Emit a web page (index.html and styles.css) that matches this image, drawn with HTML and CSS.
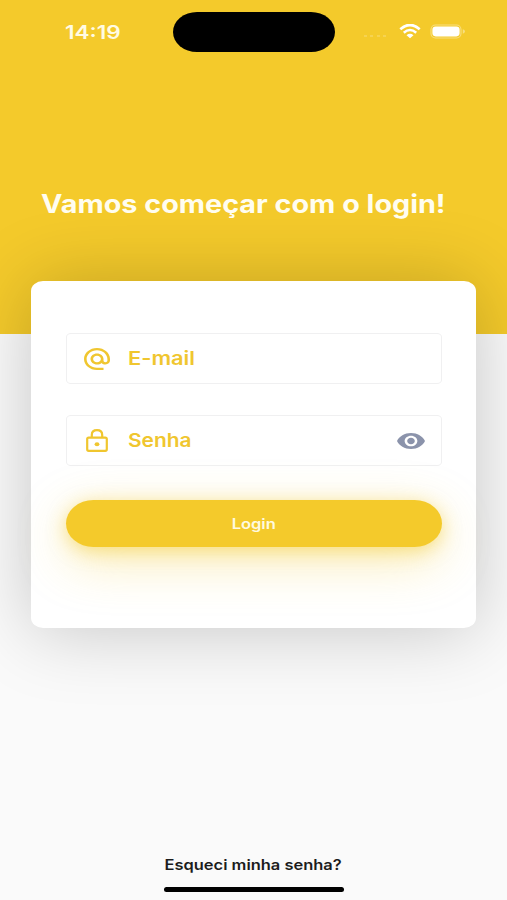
FILE: index.html
```html
<!DOCTYPE html>
<html lang="pt-BR">
<head>
    <meta charset="UTF-8">
    <meta name="viewport" content="width=device-width, initial-scale=1.0">
    <title>Login</title>
    <link rel="stylesheet" href="styles.css">
</head>
<body>
    <div class="screen">
        <header class="hero">
            <div class="status-bar">
                <span class="time"><span class="wide">14:19</span></span>
                <div class="island"></div>
                <div class="status-icons">
                    <svg class="signal" viewBox="0 0 25 6">
                        <path d="M1 3h4M7 3h4M14 3h4M20 3h4" stroke="#fff" stroke-width="2" stroke-dasharray="3 1"/>
                    </svg>
                    <svg class="wifi" viewBox="0 0 22 15">
                        <path d="M1.3 5.2Q11-3.2 20.7 5.2" fill="none" stroke="#fff" stroke-width="2.7"/>
                        <path d="M4.8 8.8Q11 3.3 17.2 8.8" fill="none" stroke="#fff" stroke-width="2.5"/>
                        <path d="M7.5 11.2Q11 8.4 14.5 11.2L11 14.3z" fill="#fff"/>
                    </svg>
                    <svg class="battery" viewBox="0 0 37 16">
                        <rect x="1" y="1" width="30" height="13" rx="4.5" fill="none" stroke="#fff" stroke-opacity=".4" stroke-width="1.1"/>
                        <rect x="2.4" y="2.6" width="27.2" height="9.8" rx="3.3" fill="#fff"/>
                        <path d="M32.8 5.3v4.4q2.2-.6 2.2-2.2t-2.2-2.2z" fill="#fff" fill-opacity=".4"/>
                    </svg>
                </div>
            </div>
            <h1 class="title"><span class="wide">Vamos começar com o login!</span></h1>
        </header>

        <form class="card">
            <div class="field">
                <svg class="icon-at" viewBox="2 2 20 20" preserveAspectRatio="none" fill="#f0c62f">
                    <path d="M12 2C6.48 2 2 6.48 2 12s4.48 10 10 10h5v-2h-5c-4.34 0-8-3.66-8-8s3.66-8 8-8 8 3.66 8 8v1.43c0 .79-.71 1.57-1.5 1.57s-1.5-.78-1.5-1.57V12c0-2.76-2.24-5-5-5s-5 2.24-5 5 2.24 5 5 5c1.38 0 2.64-.56 3.54-1.47.65.89 1.77 1.47 2.96 1.47 1.97 0 3.5-1.6 3.5-3.57V12c0-5.52-4.48-10-10-10zm0 13c-1.66 0-3-1.34-3-3s1.34-3 3-3 3 1.34 3 3-1.34 3-3 3z"/>
                </svg>
                <span class="label"><span class="wide">E-mail</span></span>
            </div>
            <div class="field">
                <svg class="icon-lock" viewBox="0 0 22 23">
                    <rect x="1.2" y="8.6" width="19.6" height="13.2" rx="1.5" fill="none" stroke="#f0c62f" stroke-width="2.2"/>
                    <path d="M5.8 8.5V6Q5.8 1.2 11 1.2T16.2 6V8.5" fill="none" stroke="#f0c62f" stroke-width="2.2"/>
                    <ellipse cx="11" cy="15.2" rx="2.4" ry="2" fill="#f0c62f"/>
                </svg>
                <span class="label password"><span class="wide">Senha</span></span>
                <svg class="icon-eye" viewBox="1 4.5 22 15" preserveAspectRatio="none" fill="#8b93ab">
                    <path d="M12 4.5C7 4.5 2.73 7.61 1 12c1.73 4.39 6 7.5 11 7.5s9.27-3.11 11-7.5c-1.73-4.39-6-7.5-11-7.5zM12 17c-2.76 0-5-2.24-5-5s2.24-5 5-5 5 2.24 5 5-2.24 5-5 5zm0-8c-1.66 0-3 1.34-3 3s1.34 3 3 3 3-1.34 3-3-1.34-3-3-3z"/>
                </svg>
            </div>
            <button class="login" type="button"><span class="wide">Login</span></button>
        </form>

        <footer class="footer">
            <a class="forgot"><span class="wide">Esqueci minha senha?</span></a>
            <div class="home-bar"></div>
        </footer>
    </div>
</body>
</html>
```
FILE: styles.css
```css
* {
    box-sizing: border-box;
}

body {
    margin: 0;
    font-family: Inter, "Open Sans", sans-serif;
    background-color: #fafafa;
}

.screen {
    display: flex;
    flex-direction: column;
    height: 900px;
    overflow: hidden;
}

svg {
    display: block;
    flex: none;
}

/* wide letterforms */
.wide {
    display: inline-block;
    transform: scaleX(1.15);
    transform-origin: left center;
    white-space: nowrap;
}

.hero {
    height: 334px;
    flex: none;
    background-color: #f4ca2b;
}

.status-bar {
    display: grid;
    grid-template-columns: 173px 162px 1fr;
    padding-top: 12px;
    height: 64px;
}

.time {
    padding: 9px 0 0 65px;
    color: #fffbe4;
    font-size: 18.5px;
    font-weight: 600;
    line-height: 22px;
}

.time .wide {
    transform: scaleX(1.22);
}

.island {
    height: 40px;
    border-radius: 24px / 20px;
    background-color: #000;
}

.status-icons {
    display: flex;
    align-items: flex-start;
    padding: 12px 0 0 28px;
}

.signal {
    width: 25px;
    height: 6px;
    margin-top: 9px;
    opacity: 0.18;
}

.wifi {
    width: 22px;
    height: 15px;
    margin-left: 11px;
}

.battery {
    width: 37px;
    height: 16px;
    margin-left: 9px;
}

.title {
    margin: 124px 0 0 41px;
    color: #fffdf0;
    font-size: 25px;
    font-weight: 700;
    line-height: 32px;
}

.card {
    display: flex;
    flex-direction: column;
    flex: none;
    width: 445px;
    height: 347px;
    margin: -53px 0 0 31px;
    padding: 52px 34px 0 35px;
    background-color: #fff;
    border-radius: 12px / 10px;
    box-shadow: 0 2px 75px rgba(0, 0, 0, 0.21);
}

.field {
    display: flex;
    align-items: center;
    height: 51px;
    margin-bottom: 31px;
    padding: 0 16px 0 17px;
    border: 1px solid #f0f0f1;
    border-radius: 5px / 4px;
}

.icon-at {
    width: 26px;
    height: 22px;
}

.icon-lock {
    width: 22px;
    height: 23px;
    margin: 0 2px;
}

.icon-eye {
    width: 28px;
    height: 16px;
    margin-left: auto;
}

.label {
    margin-left: 18px;
    color: #f0c62f;
    font-size: 19px;
    font-weight: 600;
    line-height: 24px;
}

.password .wide {
    transform: scaleX(1.1);
}

.login {
    height: 47px;
    margin-top: 3px;
    border: 0;
    border-radius: 28px / 24px;
    background-color: #f4ca2b;
    box-shadow: 0 14px 50px rgba(244, 202, 43, 0.35), 0 4px 18px rgba(244, 202, 43, 0.5);
    color: #fffae0;
    font-family: inherit;
    font-size: 14px;
    font-weight: 600;
}

.login .wide {
    transform: scaleX(1.18);
    transform-origin: center;
}

.footer {
    display: flex;
    flex-direction: column;
    align-items: center;
    margin-top: auto;
    padding-bottom: 8px;
}

.forgot {
    color: #1c1c1c;
    font-size: 14.5px;
    font-weight: 600;
    line-height: 20px;
}

.forgot .wide {
    transform: scaleX(1.135);
    transform-origin: center;
}

.home-bar {
    width: 180px;
    height: 5px;
    margin-top: 12px;
    border-radius: 3px;
    background-color: #000;
}
```
